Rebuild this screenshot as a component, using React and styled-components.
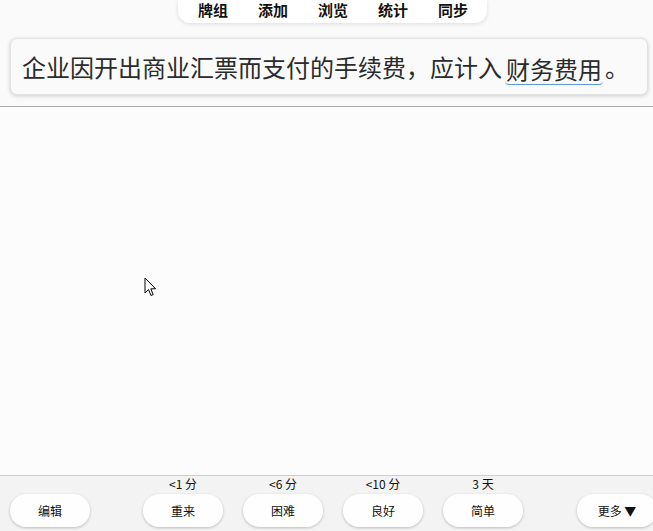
import styled, { createGlobalStyle } from "styled-components";

const GlobalStyle = createGlobalStyle`
  html, body {
    margin: 0;
    padding: 0;
    height: 100%;
  }
  body {
    background: #fcfcfc;
    font-family: "Noto Sans CJK SC", "Noto Sans", sans-serif;
    color: #222;
    overflow: hidden;
  }
  #root {
    height: 100%;
  }
`;

const navItems = ["牌组", "添加", "浏览", "统计", "同步"];

const answers = [
  { due: "<1 分", label: "重来" },
  { due: "<6 分", label: "困难" },
  { due: "<10 分", label: "良好" },
  { due: "3 天", label: "简单" },
];

function App() {
  return (
    <>
      <GlobalStyle />
      <Page>
        <Header>
          <NavBar>
            {navItems.map((item) => (
              <NavItem key={item}>{item}</NavItem>
            ))}
          </NavBar>
          <QuestionCard>
            企业因开出商业汇票而支付的手续费，应计入<Cloze>财务费用</Cloze>。
          </QuestionCard>
        </Header>
        <Body>
          <Cursor width="13" height="20" viewBox="0 0 13 20">
            <path
              d="M1 1 L1 16 L4.5 12.5 L7 18.5 L9.2 17.6 L6.8 11.8 L11.6 11.8 Z"
              fill="#fff"
              stroke="#000"
              strokeWidth="1"
              strokeLinejoin="miter"
            />
          </Cursor>
        </Body>
        <BottomBar>
          <SideButton>编辑</SideButton>
          <AnswerGroup>
            {answers.map((a) => (
              <AnswerColumn key={a.label}>
                <Due>{a.due}</Due>
                <PillButton>{a.label}</PillButton>
              </AnswerColumn>
            ))}
          </AnswerGroup>
          <MoreButton>更多 ▼</MoreButton>
        </BottomBar>
      </Page>
    </>
  );
}

const Page = styled.div`
  display: flex;
  flex-direction: column;
  height: 531px;
  width: 653px;
`;

const Header = styled.div`
  display: flex;
  flex-direction: column;
  align-items: stretch;
  background: #fafafa;
  border-bottom: 1px solid #a8a8a8;
  padding-bottom: 11px;
`;

const NavBar = styled.div`
  align-self: flex-start;
  margin-left: 178px;
  width: 309px;
  height: 23px;
  box-sizing: border-box;
  background: #fff;
  border-radius: 0 0 12px 12px;
  box-shadow: 0 1px 4px rgba(0, 0, 0, 0.12);
  display: flex;
  justify-content: center;
  gap: 30px;
  padding: 2px 0 0 1px;
`;

const NavItem = styled.span`
  font-size: 15px;
  font-weight: 700;
  line-height: 15px;
  color: #111;
`;

const QuestionCard = styled.div`
  margin: 15px 5px 0 10px;
  height: 57px;
  box-sizing: border-box;
  background: #fafafa;
  border: 1px solid #e2e2e2;
  border-radius: 7px;
  box-shadow: 0 1px 4px rgba(0, 0, 0, 0.18);
  display: flex;
  align-items: center;
  padding-left: 11px;
  font-size: 24px;
  color: #2b2b2b;
  white-space: nowrap;
`;

const Cloze = styled.span`
  display: inline-block;
  margin: 0 2px 9px 3px;
  padding: 4px 1px 0 1px;
  line-height: 30px;
  border-bottom: 1px solid #5a9ad8;
  border-radius: 0 0 4px 4px;
  align-self: flex-end;
`;

const Body = styled.div`
  flex: 1;
  position: relative;
  background: #fcfcfc;
`;

const Cursor = styled.svg`
  position: absolute;
  left: 144px;
  top: 170px;
`;

const BottomBar = styled.div`
  height: 56px;
  box-sizing: border-box;
  background: #f3f3f3;
  border-top: 1px solid #cfcfcf;
  display: flex;
  align-items: flex-end;
  padding: 0 0 4px 10px;
  overflow: hidden;
`;

const PillButton = styled.div`
  width: 80px;
  height: 33px;
  flex-shrink: 0;
  box-sizing: border-box;
  border-radius: 16px;
  background: #fefefe;
  box-shadow: 0 1px 3px rgba(0, 0, 0, 0.22);
  display: flex;
  align-items: center;
  justify-content: center;
  font-size: 12px;
  color: #111;
`;

const SideButton = styled(PillButton)``;

const MoreButton = styled(PillButton)`
  margin-left: 54px;
`;

const AnswerGroup = styled.div`
  display: flex;
  gap: 20px;
  margin-left: 53px;
`;

const AnswerColumn = styled.div`
  display: flex;
  flex-direction: column;
  align-items: center;
  gap: 3px;
`;

const Due = styled.span`
  font-size: 12px;
  line-height: 14px;
  color: #111;
`;

export default App;
